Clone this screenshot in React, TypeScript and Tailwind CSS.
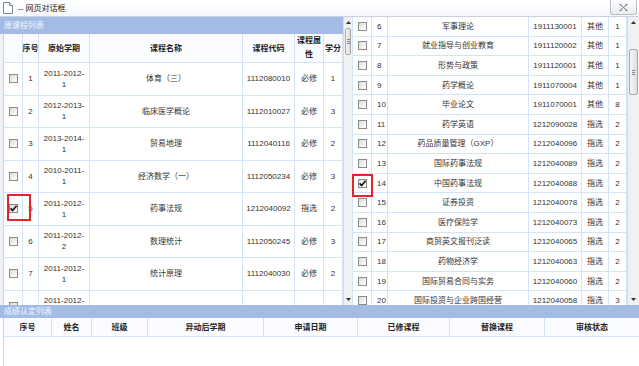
import React from "react"

type LeftRow = {
  no: string
  term: [string, string]
  name: string
  code: string
  kind: string
  credit: string
  checked?: boolean
}

type RightRow = {
  no: string
  name: string
  code: string
  kind: string
  credit: string
  checked?: boolean
}

const leftRows: LeftRow[] = [
  { no: "1", term: ["2011-2012-", "1"], name: "体育（三）", code: "1112080010", kind: "必修", credit: "1" },
  { no: "2", term: ["2012-2013-", "1"], name: "临床医学概论", code: "1112010027", kind: "必修", credit: "3" },
  { no: "3", term: ["2013-2014-", "1"], name: "贸易地理", code: "1112040116", kind: "必修", credit: "2" },
  { no: "4", term: ["2010-2011-", "1"], name: "经济数学（一）", code: "1112050234", kind: "必修", credit: "3" },
  { no: "5", term: ["2011-2012-", "1"], name: "药事法规", code: "1212040092", kind: "指选", credit: "2", checked: true },
  { no: "6", term: ["2011-2012-", "2"], name: "数理统计", code: "1112050245", kind: "必修", credit: "3" },
  { no: "7", term: ["2011-2012-", "1"], name: "统计原理", code: "1112040030", kind: "必修", credit: "2" },
  { no: "", term: ["2011-2012-", ""], name: "", code: "", kind: "", credit: "" },
]

const rightRows: RightRow[] = [
  { no: "6", name: "军事理论", code: "1911130001", kind: "其他", credit: "1" },
  { no: "7", name: "就业指导与创业教育", code: "1911120002", kind: "其他", credit: "1" },
  { no: "8", name: "形势与政策", code: "1911120001", kind: "其他", credit: "1" },
  { no: "9", name: "药学概论", code: "1911070004", kind: "其他", credit: "1" },
  { no: "10", name: "毕业论文", code: "1911070001", kind: "其他", credit: "8" },
  { no: "11", name: "药学英语", code: "1212090028", kind: "指选", credit: "2" },
  { no: "12", name: "药品质量管理（GXP）", code: "1212040096", kind: "指选", credit: "2" },
  { no: "13", name: "国际药事法规", code: "1212040089", kind: "指选", credit: "2" },
  { no: "14", name: "中国药事法规", code: "1212040088", kind: "指选", credit: "2", checked: true },
  { no: "15", name: "证券投资", code: "1212040078", kind: "指选", credit: "2" },
  { no: "16", name: "医疗保险学", code: "1212040073", kind: "指选", credit: "2" },
  { no: "17", name: "商贸英文报刊泛读", code: "1212040065", kind: "指选", credit: "2" },
  { no: "18", name: "药物经济学", code: "1212040063", kind: "指选", credit: "2" },
  { no: "19", name: "国际贸易合同与实务", code: "1212040060", kind: "指选", credit: "2" },
  { no: "20", name: "国际投资与企业跨国经营", code: "1212040058", kind: "指选", credit: "3" },
]

const cell = "flex items-center justify-center border-r border-b border-[#d5e3f6] text-center shrink-0"

function Box({ checked }: { checked?: boolean }) {
  return (
    <span className="relative inline-block w-[9px] h-[9px] border border-[#8c8c8c] bg-linear-to-br from-[#dcdcdc] to-white">
      {checked && (
        <svg viewBox="0 0 9 9" className="absolute -left-px -top-px w-[9px] h-[9px]">
          <path d="M1.6 4.4 L3.6 6.6 L7.6 1.8" fill="none" stroke="#111" strokeWidth="1.6" />
        </svg>
      )}
    </span>
  )
}

function Arrow({ up }: { up?: boolean }) {
  return (
    <div className="h-[11px] flex items-center justify-center shrink-0">
      <svg viewBox="0 0 5 3" className="w-[5px] h-[3px]">
        <path d={up ? "M0 3 L2.5 0 L5 3 Z" : "M0 0 L2.5 3 L5 0 Z"} fill="#333" />
      </svg>
    </div>
  )
}

function Thumb({ className }: { className: string }) {
  return (
    <div
      className={`mx-px rounded-[2px] border border-[#a9a9a9] bg-linear-to-r from-[#f6f6f6] to-[#dddddd] flex flex-col items-center justify-center gap-px ${className}`}
    >
      <span className="block w-[3px] h-px bg-[#888]" />
      <span className="block w-[3px] h-px bg-[#888]" />
      <span className="block w-[3px] h-px bg-[#888]" />
    </div>
  )
}

export default function App() {
  return (
    <div className="relative w-[639px] h-[366px] overflow-hidden bg-white text-[8px] leading-[11px] text-[#333] font-['Liberation_Sans','Noto_Sans_CJK_SC',sans-serif]">
      {/* title bar */}
      <div className="h-[17px] flex items-center border-b border-[#c9d3e0] bg-linear-to-b from-white to-[#f6f8fb]">
        <svg viewBox="0 0 10 12" className="ml-[3px] w-[10px] h-[12px]">
          <path d="M0.5 0.5 H6.5 L9.5 3.5 V11.5 H0.5 Z" fill="#fff" stroke="#7a8596" />
          <path d="M6.5 0.5 V3.5 H9.5" fill="#e7ebf1" stroke="#7a8596" />
        </svg>
        <span className="ml-[5px] text-[#222]">-- 网页对话框</span>
        <div className="ml-auto mr-[2px] self-start w-[27px] h-[15px] rounded-b-[3px] border border-t-0 border-[#b8bec8] bg-linear-to-b from-white to-[#e9ecf1] flex items-center justify-center">
          <svg viewBox="0 0 9 7" className="w-[9px] h-[7px]">
            <path d="M1 0.5 L8 6.5 M8 0.5 L1 6.5 M0.5 0.5 H2.5 M6.5 0.5 H8.5 M0.5 6.5 H2.5 M6.5 6.5 H8.5" stroke="#777" strokeWidth="1" fill="none" />
          </svg>
        </div>
      </div>

      {/* upper panels */}
      <div className="flex h-[288px]">
        {/* left */}
        <div className="w-[343px] flex flex-col overflow-hidden">
          <div className="h-[17px] shrink-0 bg-[#a4bce5] text-[#f3f7fd] flex items-center pl-[4px]">原课程列表</div>
          <div className="flex-1 overflow-hidden bg-[#eef3fa]">
            <div className="ml-[3px] bg-white border-l border-[#c4d5ee]">
              <div className="flex h-[29px] font-bold text-[#222] bg-[#fbfcff]">
                <div className={`${cell} w-[19px]`} />
                <div className={`${cell} w-[16px] whitespace-nowrap`}>序号</div>
                <div className={`${cell} w-[51px]`}>原始学期</div>
                <div className={`${cell} w-[153px]`}>课程名称</div>
                <div className={`${cell} w-[52px]`}>课程代码</div>
                <div className={`${cell} w-[29px] px-[2px] leading-[14px]`}>课程属性</div>
                <div className={`${cell} w-[19px] whitespace-nowrap`}>学分</div>
              </div>
              {leftRows.map((r, i) => (
                <div key={i} className="flex h-[32.5px]">
                  <div className={`${cell} w-[19px]`}>
                    <Box checked={r.checked} />
                  </div>
                  <div className={`${cell} w-[16px]`}>{r.no}</div>
                  <div className={`${cell} w-[51px] flex-col`}>
                    <span>{r.term[0]}</span>
                    <span className="h-[11px]">{r.term[1]}</span>
                  </div>
                  <div className={`${cell} w-[153px]`}>{r.name}</div>
                  <div className={`${cell} w-[52px]`}>{r.code}</div>
                  <div className={`${cell} w-[29px]`}>{r.kind}</div>
                  <div className={`${cell} w-[19px]`}>{r.credit}</div>
                </div>
              ))}
            </div>
          </div>
        </div>
        <div className="w-[9px] flex flex-col bg-[#f1f1f1] border-l border-[#dcdcdc]">
          <Arrow up />
          <Thumb className="h-[27px]" />
          <div className="flex-1" />
          <Arrow />
        </div>

        {/* right */}
        <div className="w-[287px] flex border-l border-[#d5e3f6]">
          <div className="w-[274px] overflow-hidden bg-white">
            {rightRows.map((r) => (
              <div key={r.no} className="flex h-[19.6px]">
                <div className={`${cell} w-[19px]`}>
                  <Box checked={r.checked} />
                </div>
                <div className={`${cell} w-[16px] justify-start! pl-[5px]`}>{r.no}</div>
                <div className={`${cell} w-[141px]`}>{r.name}</div>
                <div className={`${cell} w-[53px]`}>{r.code}</div>
                <div className={`${cell} w-[27px]`}>{r.kind}</div>
                <div className={`${cell} w-[18px]`}>{r.credit}</div>
              </div>
            ))}
          </div>
          <div className="w-[12px] flex flex-col bg-[#f1f1f1] border-l border-[#dcdcdc]">
            <Arrow up />
            <Thumb className="mt-[21px] h-[46px]" />
            <div className="flex-1" />
            <Arrow />
          </div>
        </div>
      </div>

      {/* bottom panel */}
      <div className="flex flex-col h-[61px]">
        <div className="h-[13px] shrink-0 bg-[#a4bce5] text-[#f3f7fd] leading-none flex items-center pl-[4px]">成绩认定列表</div>
        <div className="flex h-[19px] shrink-0 font-bold text-[#222] bg-[#fbfcff] ml-[3px] border-l border-[#c4d5ee]">
          <div className={`${cell} w-[48px]`}>序号</div>
          <div className={`${cell} w-[40px]`}>姓名</div>
          <div className={`${cell} w-[56px]`}>班级</div>
          <div className={`${cell} w-[116px]`}>异动后学期</div>
          <div className={`${cell} w-[94px]`}>申请日期</div>
          <div className={`${cell} w-[92px]`}>已修课程</div>
          <div className={`${cell} w-[95px]`}>替换课程</div>
          <div className={`${cell} w-[94px] border-r-0`}>审核状态</div>
        </div>
        <div className="flex-1 ml-[3px] border-l border-[#c4d5ee] bg-white" />
      </div>

      {/* red highlight marks */}
      <div className="absolute left-[7px] top-[194px] w-[24px] h-[27px] border-2 border-[#e3242b]" />
      <div className="absolute left-[352px] top-[174px] w-[21px] h-[23px] border-2 border-[#e3242b]" />
    </div>
  )
}
